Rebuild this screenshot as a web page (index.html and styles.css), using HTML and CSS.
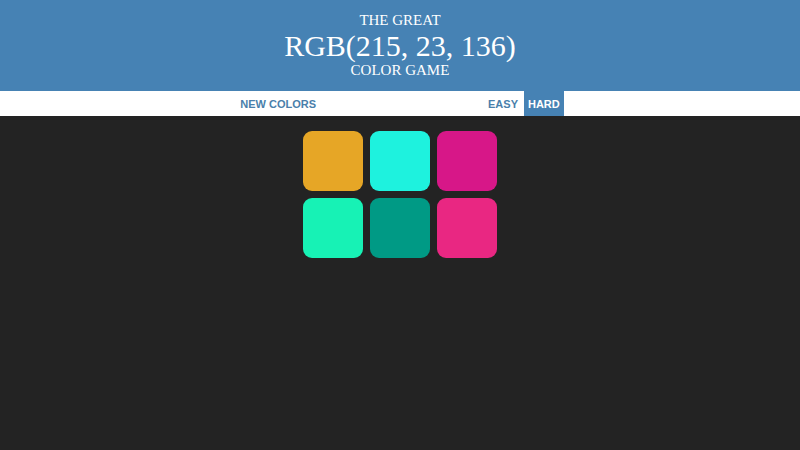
FILE: index.html
```html
<!DOCTYPE html>
<html lang="en">
<head>
<meta charset="utf-8">
<title>Color Game</title>
<link rel="stylesheet" href="styles.css">
</head>
<body>
<h1 class="title">
  THE GREAT
  <br>
  <span class="color-display">RGB(215, 23, 136)</span>
  <br>
  COLOR GAME
</h1>

<div class="stripe">
  <button class="btn">NEW COLORS</button>
  <span class="message"></span>
  <button class="btn mode">EASY</button>
  <button class="btn mode selected">HARD</button>
</div>

<div class="board">
  <div class="square" style="background: rgb(230, 166, 38);"></div>
  <div class="square" style="background: rgb(30, 242, 222);"></div>
  <div class="square" style="background: rgb(215, 23, 136);"></div>
  <div class="square" style="background: rgb(23, 242, 181);"></div>
  <div class="square" style="background: rgb(0, 154, 133);"></div>
  <div class="square" style="background: rgb(233, 39, 130);"></div>
</div>
</body>
</html>
```

FILE: styles.css
```css
body {
  margin: 0;
  background: #232323;
}

.title {
  margin: 0;
  padding: 12px 0 12px;
  background: #4682b4;
  color: #fff;
  font-family: "Liberation Serif", "Times New Roman", serif;
  font-weight: normal;
  font-size: 15px;
  line-height: 1.12;
  text-align: center;
}

.color-display {
  font-size: 200%;
}

.stripe {
  background: #fff;
  height: 25px;
  display: flex;
  justify-content: center;
  gap: 2px;
}

.btn {
  border: none;
  background: none;
  height: 25px;
  padding: 0 4px;
  margin: 0;
  color: #4a7fab;
  font-family: "Liberation Sans", Arial, sans-serif;
  font-weight: bold;
  font-size: 11px;
  text-transform: uppercase;
  outline: none;
  cursor: pointer;
}

.btn.selected {
  background: #4682b4;
  color: #fff;
}

.message {
  width: 160px;
}

.board {
  width: 200px;
  margin: 11.7px auto 0;
  display: flex;
  flex-wrap: wrap;
}

.square {
  width: 60px;
  height: 60px;
  margin: 3.33px;
  border-radius: 9px;
}
```
